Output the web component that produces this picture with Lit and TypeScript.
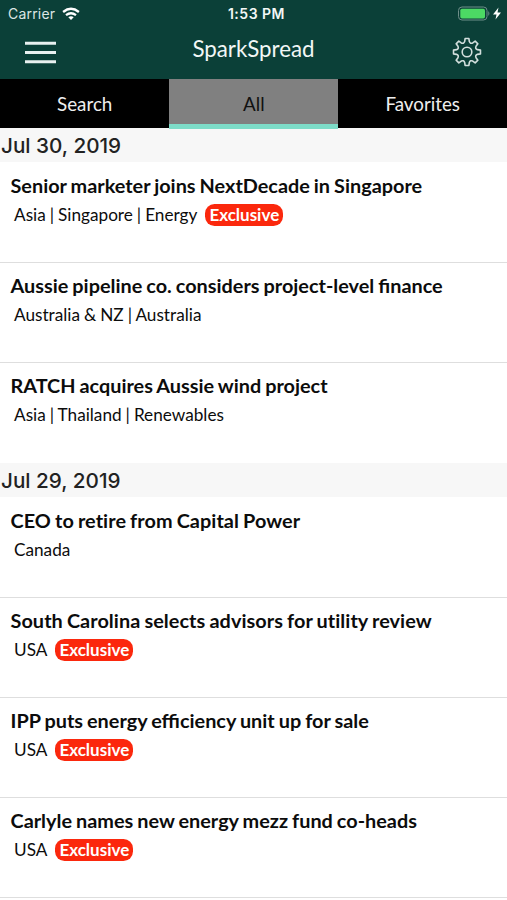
import { LitElement, html, css, svg } from "lit";
import { customElement } from "lit/decorators.js";
import { classMap } from "lit/directives/class-map.js";

interface Article { title: string; tags: string; exclusive?: boolean }
interface Day { date: string; articles: Article[] }

const DAYS: Day[] = [
  { date: "Jul 30, 2019", articles: [
    { title: "Senior marketer joins NextDecade in Singapore", tags: "Asia | Singapore | Energy", exclusive: true },
    { title: "Aussie pipeline co. considers project-level finance", tags: "Australia & NZ | Australia" },
    { title: "RATCH acquires Aussie wind project", tags: "Asia | Thailand | Renewables" },
  ] },
  { date: "Jul 29, 2019", articles: [
    { title: "CEO to retire from Capital Power", tags: "Canada" },
    { title: "South Carolina selects advisors for utility review", tags: "USA", exclusive: true },
    { title: "IPP puts energy efficiency unit up for sale", tags: "USA", exclusive: true },
    { title: "Carlyle names new energy mezz fund co-heads", tags: "USA", exclusive: true },
  ] },
];

// Eight-toothed gear outline centred on 0,0: each tooth narrows outwards, valleys are curved.
function gearPath(): string {
  const at = (a: number, r: number) => `${(Math.sin(a) * r).toFixed(2)} ${(-Math.cos(a) * r).toFixed(2)}`;
  let d = "";
  for (let i = 0; i < 8; i++) {
    const b = (i * Math.PI) / 4;
    d += `${i ? "L" : "M"}${at(b - 0.22, 10.7)}L${at(b - 0.14, 13.6)}L${at(b + 0.14, 13.6)}L${at(b + 0.22, 10.7)}`;
    d += `Q${at(b + Math.PI / 8, 8.6)} ${at(b + Math.PI / 4 - 0.22, 10.7)}`;
  }
  return d + "Z";
}

@customElement("app-root")
export class AppRoot extends LitElement {
  static styles = css`
    :host { display: block; height: 900px; overflow: hidden; background: #fff; color: #0c0c0c; font-family: Lato, sans-serif; }
    .header { height: 79px; background: #0b4038; color: #f2f7f6; }
    .status { height: 27px; display: grid; grid-template-columns: 1fr auto 1fr; align-items: center; font-family: Inter, sans-serif; font-size: 14px; padding: 0 4px 0 8px; box-sizing: border-box; }
    .carrier { display: flex; align-items: center; gap: 7px; letter-spacing: .2px; color: #dce6e4; }
    .time { font-weight: 600; letter-spacing: .5px; padding-left: 2px; }
    .power { display: flex; justify-content: flex-end; padding-right: 1px; }
    .bar { height: 52px; display: grid; grid-template-columns: 56px 1fr 56px; padding: 0 12px; align-items: center; }
    .bar svg { display: block; }
    .menu { padding-left: 13px; }
    .gear { justify-self: end; padding: 0 13px 2px 0; }
    .name { text-align: center; font-size: 22.3px; line-height: 26px; padding-bottom: 9px; }
    .tabs { height: 49px; display: grid; grid-template-columns: 169.400px 169px 1fr; background: #000; color: #eee; font-size: 18.800px; line-height: 50px; text-align: center; }
    .tab.active { background: #808080; color: #111; box-shadow: inset 0 -5px #7ddcc8; }
    .date { height: 34px; line-height: 36px; background: #f7f7f7; padding-left: 1px; font-family: Inter, sans-serif; font-size: 20.7px; font-weight: 500; color: #222; }
    .article { height: 100.2px; box-sizing: border-box; padding: 10px 10.500px 0; }
    .article + .article { box-shadow: inset 0 1px #dedede; }
    .list-end { height: 1px; background: #dedede; }
    .title { font-size: 19.850px; word-spacing: -.8px; line-height: 26px; font-weight: 700; white-space: nowrap; }
    .title.plain { font-variant-ligatures: none; letter-spacing: .06px; }
    .meta { display: flex; align-items: center; height: 22px; margin-top: 6px; padding-left: 3.500px; font-size: 17.2px; word-spacing: -.4px; gap: 8px; }
    .tags { margin-top: -1px; }
    .badge { background: #fb280d; color: #fff; font-size: 17px; font-weight: 700; border-radius: 9.500px; height: 22px; line-height: 22px; padding: 0 4px; }
  `;

  render() {
    return html`
      <header class="header">
        <div class="status">
          <div class="carrier">Carrier
            <svg width="18" height="14" viewBox="0 0 18 14" fill="none" stroke="#fff" stroke-width="2.3"><path d="M1.100 5Q9-1.400 16.900 5M4 8.200Q9 4.300 14 8.200"/><path d="M6.300 10.300Q9 8.200 11.700 10.300L9 13Z" fill="#fff" stroke="none"/></svg>
          </div>
          <div class="time">1:53 PM</div>
          <div class="power"><svg width="44" height="16" viewBox="0 0 44 16"><rect x=".500" y="1" width="28.500" height="13" rx="3.500" fill="none" stroke="#6f8f89"/><rect x="2.300" y="2.700" width="24.700" height="9.700" rx="1.700" fill="#4cd964"/><path d="M30.300 5q2.200 2.500 0 5z" fill="#6f8f89"/><path d="M40.500 1.500L35 8.500h3.500L37.500 13.500l5.500-7h-3.500z" fill="#fff"/></svg></div>
        </div>
        <div class="bar">
          <div class="menu"><svg width="31" height="24" viewBox="0 0 31 24" stroke="#e9f1f0" stroke-width="3"><path d="M0 2.300H31M0 11.500H31M0 20.700H31"/></svg></div>
          <div class="name">SparkSpread</div>
          <div class="gear"><svg width="30" height="30" viewBox="-15 -15 30 30" fill="none" stroke="#d3dfdd" stroke-width="1.600" stroke-linejoin="round">${svg`<path d=${gearPath()}></path>`}<circle r="4.800"/></svg></div>
        </div>
      </header>
      <nav class="tabs"><div class="tab">Search</div><div class="tab active">All</div><div class="tab">Favorites</div></nav>
      ${DAYS.map((d) => html`<section><div class="date">${d.date}</div>
        ${d.articles.map((a) => html`<article class="article"><div class=${classMap({ title: true, plain: a.title.includes("ti") })}>${a.title}</div>
          <div class="meta"><span class="tags">${a.tags}</span>${a.exclusive ? html`<span class="badge">Exclusive</span>` : ""}</div></article>`)}
      </section>`)}
      <div class="list-end"></div>
    `;
  }
}
